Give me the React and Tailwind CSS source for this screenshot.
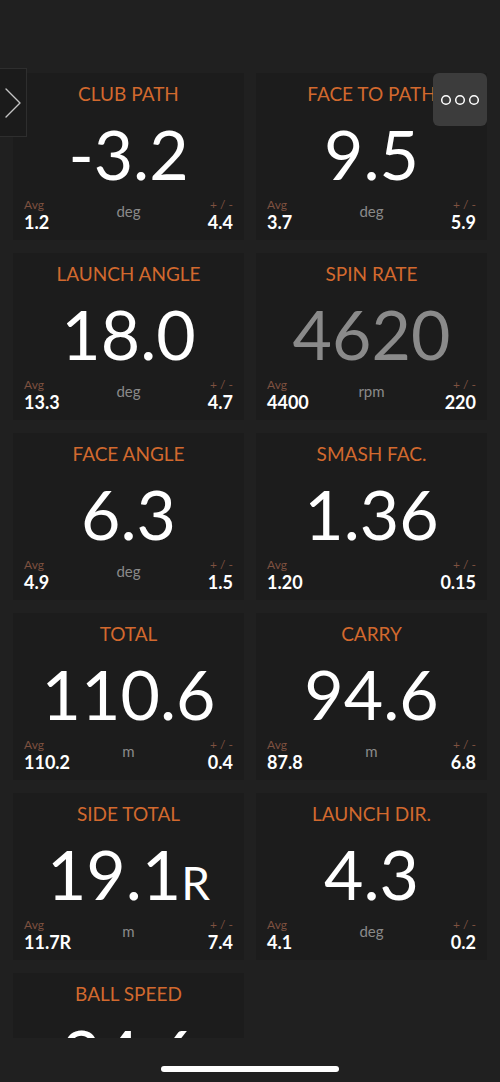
import React from "react";

const tiles = [
  { t: "CLUB PATH", v: "-3.2", a: "1.2", u: "deg", d: "4.4" },
  { t: "FACE TO PATH", v: "9.5", a: "3.7", u: "deg", d: "5.9" },
  { t: "LAUNCH ANGLE", v: "18.0", a: "13.3", u: "deg", d: "4.7" },
  { t: "SPIN RATE", v: "4620", a: "4400", u: "rpm", d: "220", dim: true },
  { t: "FACE ANGLE", v: "6.3", a: "4.9", u: "deg", d: "1.5" },
  { t: "SMASH FAC.", v: "1.36", a: "1.20", u: "", d: "0.15" },
  { t: "TOTAL", v: "110.6", a: "110.2", u: "m", d: "0.4" },
  { t: "CARRY", v: "94.6", a: "87.8", u: "m", d: "6.8" },
  { t: "SIDE TOTAL", v: "19.1", vs: "R", a: "11.7R", u: "m", d: "7.4" },
  { t: "LAUNCH DIR.", v: "4.3", a: "4.1", u: "deg", d: "0.2" },
  { t: "BALL SPEED", v: "34.6", a: "33.9", u: "m/s", d: "0.8" },
];

function Tile({ tile }) {
  return (
    <div className="h-[167px] bg-[#1c1c1c] flex flex-col pt-[10px]">
      <div className="text-center text-[19px] leading-[22px] text-[#d2692e] whitespace-nowrap">
        {tile.t}
      </div>
      <div
        className={
          "mt-[15px] text-center text-[68px] leading-none h-[68px] whitespace-nowrap " +
          (tile.dim ? "text-[#8a8a8a]" : "text-white")
        }
      >
        {tile.v}
        {tile.vs && <span className="text-[46px]">{tile.vs}</span>}
      </div>
      <div className="mt-[10px] flex justify-between items-start px-[11px]">
        <div className="flex flex-col w-[70px]">
          <span className="text-[12px] leading-[14px] text-[#7e5140]">Avg</span>
          <span className="text-[18px] leading-[20px] font-bold text-white">{tile.a}</span>
        </div>
        <span className="mt-[4px] text-[15px] leading-[18px] text-[#8a8a8a]">{tile.u}</span>
        <div className="flex flex-col items-end w-[70px]">
          <span className="text-[12px] leading-[14px] text-[#7e5140]">+ / -</span>
          <span className="text-[18px] leading-[20px] font-bold text-white">{tile.d}</span>
        </div>
      </div>
    </div>
  );
}

export default function App() {
  return (
    <div className="relative w-[500px] h-[1082px] bg-[#202020] flex flex-col font-['Lato','Liberation_Sans',sans-serif] overflow-hidden">
      <div className="h-[1038px] overflow-hidden pt-[73px]">
        <div className="grid grid-cols-2 gap-x-[12px] gap-y-[13px] px-[13px]">
          {tiles.map((t) => (
            <Tile key={t.t} tile={t} />
          ))}
        </div>
      </div>
      <div className="flex-1 flex justify-center pt-[28px]">
        <div className="w-[178px] h-[6px] rounded-full bg-white" />
      </div>

      {/* left tab */}
      <div className="absolute left-0 top-[68px] w-[27px] h-[69px] bg-[#1b1b1b] border border-l-0 border-[#2e2e2e] flex items-center justify-center">
        <svg width="18" height="32" viewBox="0 0 18 32" fill="none">
          <path d="M2 2 L16 16 L2 30" stroke="#c4c4c4" strokeWidth="1.4" strokeLinecap="round" strokeLinejoin="round" />
        </svg>
      </div>

      {/* more button */}
      <div className="absolute left-[433px] top-[73px] w-[54px] h-[53px] rounded-[6px] bg-[#3c3c3c] flex items-center justify-center">
        <svg width="40" height="12" viewBox="0 0 40 12" fill="none">
          <circle cx="6" cy="6" r="4.3" stroke="white" strokeWidth="1.5" />
          <circle cx="20" cy="6" r="4.3" stroke="white" strokeWidth="1.5" />
          <circle cx="34" cy="6" r="4.3" stroke="white" strokeWidth="1.5" />
        </svg>
      </div>
    </div>
  );
}
